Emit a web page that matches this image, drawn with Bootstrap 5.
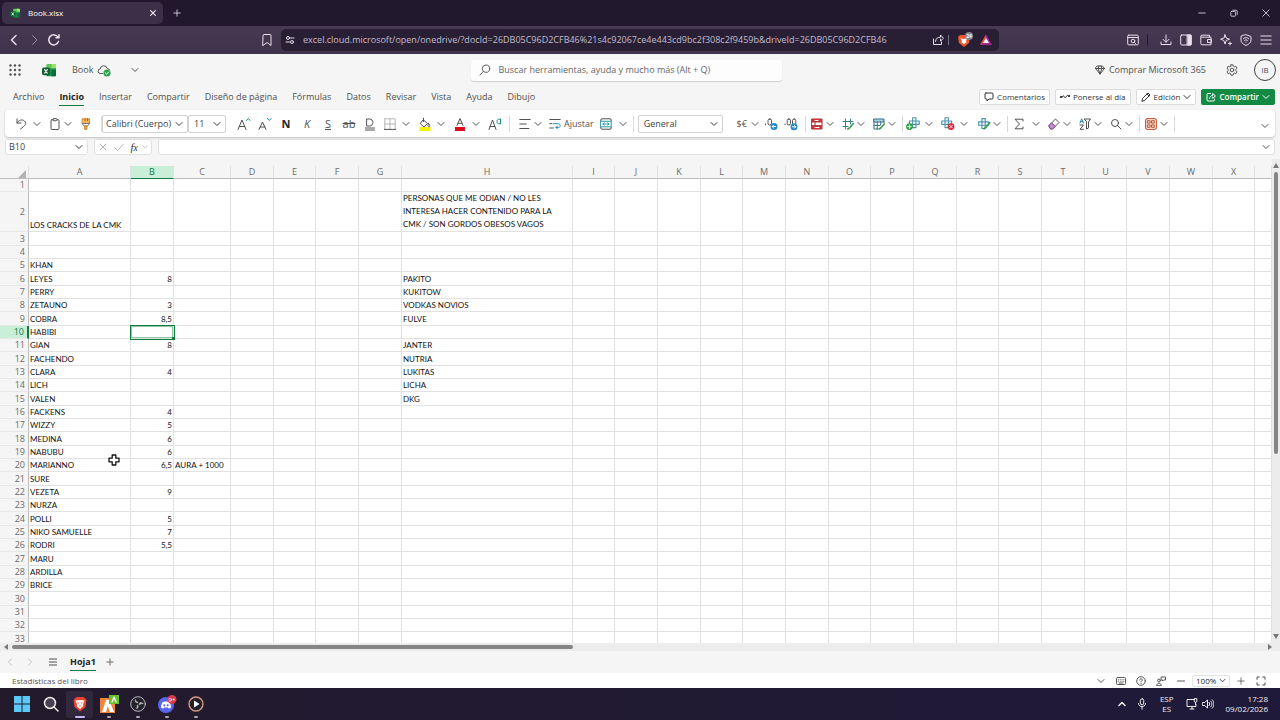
<!DOCTYPE html>
<html lang="es">
<head>
<meta charset="utf-8">
<meta name="viewport" content="width=device-width, initial-scale=1">
<title>Book.xlsx</title>
<link href="https://cdn.jsdelivr.net/npm/bootstrap@5.3.0/dist/css/bootstrap.min.css" rel="stylesheet">
<style>
:root{--ui:"Open Sans","Noto Sans",sans-serif;--green:#107c41;--line:#e1e1e1}
body{font-family:var(--ui);font-size:9px;line-height:14px;color:#505050;background:#f5f5f5;height:100vh;overflow:hidden}
button,select,input{font-family:inherit;color:inherit}
.plain{background:none;border:0;padding:0;font-size:inherit;line-height:inherit;display:inline-flex;align-items:center;justify-content:center;flex:none}
svg{display:block;flex:none;fill:none;stroke:currentColor;stroke-width:1;stroke-linecap:round;stroke-linejoin:round}
.flat{stroke:none}.solid{fill:currentColor;stroke:none}.heavy{stroke-width:1.5}
.i8{width:8px;height:8px}.i10{width:10px;height:10px}.i12{width:12px;height:12px}.i14{width:14px;height:14px}.i16{width:16px;height:16px}
a{color:inherit;text-decoration:none}
.side{flex:1 1 0}
/* browser chrome */
.tabstrip{height:26px;background:#21182d;color:#e9e4ee}
.browser-tab{width:161px;height:22px;margin-left:2px;padding:0 6px 0 8px;background:#3b3047;border-radius:5px;font-size:8px}
.addressbar{height:28px;background:linear-gradient(#463a53,#3e334a);color:#e6e0ea}
.urlbox{flex:0 1 718px;height:22px;background:#281f34;border-radius:5px;font-size:9px}
.urlbox input{background:none;border:0;padding:0;min-width:0;color:#c4bccd}
.win{gap:20px}
/* office header */
.office{height:32px}
.searchbox{width:311px;height:21px;background:#fdfdfd;border-radius:3px;box-shadow:0 1px 1px #cfcfcf;margin-right:32px}
.searchbox input{border:0;background:none;padding:0;color:#616161}
.searchbox input::placeholder{color:#666;opacity:1}
.avatar{width:22px;height:22px;border:1px solid #424242;border-radius:50%;font-size:8px}
.menu-row{height:24px;padding:0 5px 2px 13px}
.menu-row nav{gap:15px}
.menu-row nav a{line-height:17px}
.menu-row nav a.on,.sheet-on{font-weight:700;color:#242424;border-bottom:1px solid var(--green)}
.cmd{height:16px;border:1px solid #dcdcdc;background:#fff;border-radius:2px;font-size:8px;gap:3px;color:#333}
.cmd.share{background:#128a43;border-color:#128a43;color:#fff;font-weight:600}
/* ribbon */
.ribbon{height:27px;margin:0 5px;padding-left:6px;background:#fff;border-radius:4px;box-shadow:0 1px 2px #bdbdbd}
.rb{width:20px;height:20px}.rb.slim{width:14px}.rc{width:12px;height:20px}
.gap-px1{gap:1px}.gap-px3{gap:3px}.gap-px5{gap:5px}
.rb.labelled{width:auto;gap:3px;padding:0 2px}
.bar{width:1px;height:16px;background:#dadada;flex:none}
.pick{height:18px;border:1px solid #d1d1d1;border-radius:2px;background-color:#fff;color:#424242;font-size:9px;line-height:14px;padding:0 14px 0 3px;background-size:8px 8px;background-position:right 4px center;flex:none}
.ltr{font-size:11px;line-height:14px}
/* formula bar */
.fbar{height:16px;margin:2px 5px 11px;gap:6px}
.fbox{height:16px;border:1px solid #e0e0e0;background:#fff;border-radius:3px}
.fbox .form-select{border:0;padding-top:0;padding-bottom:0;height:14px}
/* sheet */
.sheet{min-height:0}
.cells{table-layout:fixed;width:100%;border-collapse:separate;border-spacing:0;background:#fff}
.cells th{font-weight:400;font-size:9px;line-height:12px;color:#6a6a6a;background:#f5f5f5;padding:0;text-align:center}
.cells thead th{height:13px;border-right:1px solid var(--line);border-bottom:1px solid #bdbdbd}
.cells thead th.sel{background:#caefd8;color:var(--green);border-bottom:1px solid var(--green)}
.cells tbody tr{height:13px}
.cells tbody tr:nth-child(3n){height:14px}
.cells tbody tr:nth-child(2){height:40px}
.cells tbody th{text-align:right;padding-right:3px;border-right:1px solid #bdbdbd;border-bottom:1px solid #e8e8e8}
.cells tbody th.sel{background:#caefd8;color:var(--green);border-right:2px solid var(--green)}
.cells td{font-family:Lato,"Open Sans",sans-serif;font-size:8px;line-height:12px;color:#111;padding:0 1px;border-right:1px solid var(--line);border-bottom:1px solid var(--line);vertical-align:bottom;white-space:pre}
.cells td.num{text-align:right}
.cells td.wrapped{line-height:13px}
.cells td.active-cell{outline:1px solid var(--green);box-shadow:inset 0 0 0 1px #8cc7a4;position:relative}
.cells td.active-cell::after{content:"";position:absolute;right:-2px;bottom:-2px;width:3px;height:3px;background:var(--green)}
.corner{width:0;height:0;border-left:8px solid transparent;border-bottom:8px solid #b3b3b3;margin:3px 2px 0 auto}
.pointer{position:absolute;left:108px;top:288px}
.vscroll{width:8px;background:#ececec;margin-top:-7px}
.vscroll i{width:4px;height:282px;background:#858585;border-radius:2px}
.hscroll{height:8px;background:#ececec}
.hscroll i{width:44%;height:4px;background:#858585;border-radius:2px}
.tri{stroke:none;fill:#777}
.sheetbar{height:22px}
.sheet-on{line-height:17px}
.status{height:15px;padding:0 14px 0 12px;background:#fff;font-size:8px;color:#555}
.status>div{gap:6px}
.zoompick{height:12px;width:38px;border:1px solid #e3e3e3;border-radius:2px;font-size:8px;line-height:10px;padding:0 10px 0 3px;background-size:7px 7px;background-position:right 3px center}
/* taskbar */
.taskbar{height:32px;background:linear-gradient(90deg,#231a2c,#1f1a3a);color:#eee;font-size:8px;line-height:10px}
.app{width:27px;height:27px;margin-right:2px;border-radius:3px;position:relative}
.app.on{background:#30283d}
.app.run::after{content:"";position:absolute;bottom:0;left:50%;width:4px;height:2px;margin-left:-2px;border-radius:1px;background:#aaa}
.app.on::after{width:10px;margin-left:-5px;background:#c9b6ee}
</style>
</head>
<body class="d-flex flex-column">
<svg width="0" height="0" style="display:none">
<symbol id="chev" viewBox="0 0 8 8"><path d="M1 2.500 4 5.500 7 2.500"/></symbol>
<symbol id="xl" viewBox="0 0 16 16"><g stroke="none"><path d="M6 1h9a1 1 0 0 1 1 1v5H5V2a1 1 0 0 1 1-1z" fill="#5fc653"/><path d="M11 1h4a1 1 0 0 1 1 1v5h-5z" fill="#9be36e"/><path d="M5 6h11v8a1 1 0 0 1-1 1H6a1 1 0 0 1-1-1z" fill="#1e9348"/><path d="M11 8h5v6a1 1 0 0 1-1 1h-4z" fill="#0f6b38"/><rect x="0" y="5" width="9" height="9" rx="2" fill="#0c5f33"/></g><path d="M3 7.500 6 11.500M6 7.500 3 11.500" stroke="#fff" stroke-width="1.300"/></symbol>
<symbol id="plus" viewBox="0 0 10 10"><path d="M5 1v8M1 5h8"/></symbol>
<symbol id="cross" viewBox="0 0 10 10"><path d="M2 2 8 8M8 2 2 8"/></symbol>
<symbol id="cells" viewBox="0 0 16 16"><path d="M6 2h4v4h4v4h-4v4H6v-4H2V6h4zM6 6h4v4H6z" stroke="#4a93ad" stroke-width="1.400"/></symbol>
</svg>

<header class="tabstrip d-flex align-items-center flex-shrink-0">
  <div class="browser-tab d-flex align-items-center">
    <svg class="i10"><use href="#xl"/></svg><span class="ms-1 ps-1 flex-grow-1 text-white">Book.xlsx</span>
    <button class="plain" aria-label="Cerrar pestaña"><svg class="i8 heavy" viewBox="0 0 10 10"><path d="M2 2 8 8M8 2 2 8"/></svg></button>
  </div>
  <button class="plain ms-2 i12" aria-label="Nueva pestaña"><svg class="i8"><use href="#plus"/></svg></button>
  <div class="win d-flex ms-auto pe-2">
    <button class="plain i12" aria-label="Minimizar"><svg class="i8" viewBox="0 0 10 10"><path d="M1 5h8"/></svg></button>
    <button class="plain i12" aria-label="Restaurar"><svg class="i8" viewBox="0 0 10 10"><rect x="1" y="3" width="6" height="6" rx="1"/><path d="M3.500 1.500H7.500a1.500 1.500 0 0 1 1.500 1.500v4"/></svg></button>
    <button class="plain i12" aria-label="Cerrar"><svg class="i8" viewBox="0 0 10 10"><path d="M1 1 9 9M9 1 1 9"/></svg></button>
  </div>
</header>

<div class="addressbar d-flex align-items-center flex-shrink-0">
  <div class="side d-flex ps-2 gap-2">
    <button class="plain i12" aria-label="Atrás"><svg class="i12 heavy" viewBox="0 0 12 12"><path d="M8 1.500 3.500 6 8 10.500"/></svg></button>
    <button class="plain i12 opacity-50" aria-label="Adelante"><svg class="i12" viewBox="0 0 12 12"><path d="M4.500 1.500 9 6 4.500 10.500"/></svg></button>
    <button class="plain i12" aria-label="Recargar"><svg class="i12 heavy" viewBox="0 0 12 12"><path d="M10.500 7.500A5 5 0 1 1 10 3.200M11 .8v3H8"/></svg></button>
    <button class="plain i12 ms-auto me-2" aria-label="Marcador"><svg class="i12" viewBox="0 0 12 12"><path d="M2 1.500a1 1 0 0 1 1-1h6a1 1 0 0 1 1 1v10L6 8.500l-4 3z"/></svg></button>
  </div>
  <div class="urlbox d-flex align-items-center px-1">
    <svg class="i10" viewBox="0 0 10 10"><circle cx="3" cy="3" r="1.500"/><path d="M5.500 3H9M1 7h3.500"/><circle cx="7" cy="7" r="1.500"/></svg>
    <input class="flex-grow-1 ms-2" aria-label="Dirección" value="excel.cloud.microsoft/open/onedrive/?docId=26DB05C96D2CFB46%21s4c92067ce4e443cd9bc2f308c2f9459b&amp;driveId=26DB05C96D2CFB46">
    <button class="plain" aria-label="Compartir página"><svg class="i12" viewBox="0 0 12 12"><path d="M1.500 5v5.500h8V8M3.500 7.500c.3-3 2-4.300 5-4.300V1l3 3.200-3 3V5"/></svg></button>
    <span class="bar mx-1" style="height:10px;background:#7b7187"></span>
    <button class="plain mx-1" aria-label="Brave Shields"><svg class="i16 flat" viewBox="0 0 16 16"><path d="M3 3h8l2 2-1 6-5 4-5-4-1-6z" fill="#f0562b"/><path d="M3.500 6.200 7 7l3.500-.8L9 9l.5 1.500L7 12l-2.500-1.500L5 9z" fill="#fff"/><circle cx="12" cy="4" r="4" fill="#85828c"/><text x="12" y="6" font-size="5" text-anchor="middle" fill="#fff" font-weight="700">24</text></svg></button>
    <button class="plain" aria-label="BAT" style="width:18px"><svg class="i12 flat" viewBox="0 0 12 12"><path d="M6 .5 12 11H0z" fill="#a3278f"/><path d="M6 .5V4L3 9l-3 2z" fill="#ff4724"/><path d="M6 4l3 5H3z" fill="#fff"/></svg></button>
  </div>
  <div class="side d-flex justify-content-end gap-2 pe-2">
    <button class="plain i12" aria-label="Buscar en página"><svg class="i12" viewBox="0 0 12 12"><rect x=".7" y="1.200" width="10.600" height="9.600" rx="1"/><path d="M1 3.500h10M7.500 8.500 8.500 9.500"/><circle cx="6" cy="7" r="1.800"/></svg></button>
    <span class="bar me-1" style="height:12px;background:#241c2f"></span>
    <button class="plain i12" aria-label="Descargas"><svg class="i12" viewBox="0 0 12 12"><path d="M6 1v7M3 5.300 6 8.300l3-3M1 8v2.500h10V8"/></svg></button>
    <button class="plain i12" aria-label="Barra lateral"><svg class="i12" viewBox="0 0 12 12"><rect x=".7" y="1" width="10.600" height="10" rx="1"/><path d="M7.500 1h3.500v10H7.500z" fill="currentColor"/></svg></button>
    <button class="plain i12" aria-label="Cartera"><svg class="i12" viewBox="0 0 12 12"><path d="M9.500 3V1.200H2A1.200 1.200 0 0 0 .8 2.500v7A1.300 1.300 0 0 0 2 10.800h9V3.200H1.200M11 5.500H7.500v3H11z"/></svg></button>
    <button class="plain i12" aria-label="Leo"><svg class="i12" viewBox="0 0 12 12"><path d="M5 .8 6.200 4 9.500 5.200 6.200 6.500 5 10 3.800 6.500.6 5.200 3.800 4zM10 8v3M8.500 9.500h3"/></svg></button>
    <button class="plain i12" aria-label="VPN"><svg class="i12" viewBox="0 0 12 12"><path d="M6 .7 11 2.500v3.500c0 2.500-2 4.300-5 5.500C3 10.300 1 8.500 1 6V2.500zM3.300 4.700c1.600-1.500 3.800-1.500 5.400 0M4.500 6.400c1-.8 2-.8 3 0M6 8v.3"/></svg></button>
    <button class="plain i12" aria-label="Menú"><svg class="i12" viewBox="0 0 12 12"><path d="M.8 2h10.400M.8 6h10.400M.8 10h10.400"/></svg></button>
  </div>
</div>

<div class="office d-flex align-items-center flex-shrink-0">
  <div class="side d-flex align-items-center ps-2">
    <button class="plain me-1" aria-label="Aplicaciones" style="width:14px"><svg class="i12 solid" viewBox="0 0 12 12"><g id="dots"><circle cx="1.500" cy="1.500" r="1.200"/><circle cx="6" cy="1.500" r="1.200"/><circle cx="10.500" cy="1.500" r="1.200"/></g><use href="#dots" y="4.500"/><use href="#dots" y="9"/></svg></button>
    <svg class="i14 ms-3 me-3"><use href="#xl"/></svg>
    <span class="me-1">Book</span>
    <svg class="i14" viewBox="0 0 14 14"><path d="M5.500 10.500H3.500a2.300 2.300 0 0 1-.2-4.600 3.500 3.500 0 0 1 6.900-.4A2.400 2.400 0 0 1 12.600 7"/><circle cx="10" cy="10" r="3.600" fill="#2da44e" stroke="none"/><path d="M8.400 10l1.200 1.200 2-2.200" stroke="#fff"/></svg>
    <button class="plain ms-3 ps-1" aria-label="Más"><svg class="i8"><use href="#chev"/></svg></button>
  </div>
  <div class="searchbox d-flex align-items-center">
    <svg class="i12 ms-2 me-2" viewBox="0 0 12 12" style="color:#616161"><circle cx="7" cy="4.700" r="3.700"/><path d="M4.200 7.500 1 11"/></svg>
    <input class="flex-grow-1" aria-label="Buscar" placeholder="Buscar herramientas, ayuda y mucho más (Alt + Q)">
  </div>
  <div class="side d-flex align-items-center justify-content-end pe-1">
    <button class="plain me-3"><svg class="i10 me-1" viewBox="0 0 10 10"><path d="M2.500 1h5L9.500 3.500 5 9 .5 3.500zM.5 3.500h9M5 9 3.200 3.500 4 1M5 9l1.800-5.500L6 1"/></svg>Comprar Microsoft 365</button>
    <button class="plain ms-1 me-2" aria-label="Configuración"><svg class="i12" viewBox="0 0 12 12"><circle cx="6" cy="6" r="1.800"/><path d="M5 .8h2l.4 1.500 1 .5 1.500-.5 1.100 1.800L9.900 5.300v1.400L11 7.900 9.900 9.700l-1.500-.5-1 .5L7 11.200H5l-.4-1.500-1-.5-1.500.5L1 7.900l1.100-1.200V5.300L1 4.100l1.100-1.800 1.500.5 1-.5z"/></svg></button>
    <button class="plain avatar ms-2" aria-label="Cuenta">IB</button>
  </div>
</div>

<div class="menu-row d-flex align-items-center flex-shrink-0">
  <nav class="d-flex" aria-label="Cinta">
    <a href="#">Archivo</a><a href="#" class="on">Inicio</a><a href="#">Insertar</a><a href="#">Compartir</a><a href="#">Diseño de página</a><a href="#">Fórmulas</a><a href="#">Datos</a><a href="#">Revisar</a><a href="#">Vista</a><a href="#">Ayuda</a><a href="#">Dibujo</a>
  </nav>
  <div class="d-flex ms-auto gap-px5">
    <button class="plain cmd px-1"><svg class="i10" viewBox="0 0 10 10"><path d="M2 1h6a1 1 0 0 1 1 1v4a1 1 0 0 1-1 1H5L3 9V7H2a1 1 0 0 1-1-1V2a1 1 0 0 1 1-1z"/></svg>Comentarios</button>
    <button class="plain cmd px-1"><svg class="i10" viewBox="0 0 10 10"><path d="M1 5h1.500C4 1 4.500 8 6 5s2-1 3-1"/><circle cx="1" cy="5" r=".7" fill="currentColor"/><circle cx="9" cy="4" r=".7" fill="currentColor"/></svg>Ponerse al día</button>
    <button class="plain cmd px-1"><svg class="i10" viewBox="0 0 10 10"><path d="M1 9l.7-2.700L7 1l2 2-5.300 5.300zM6 2l2 2"/></svg>Edición<svg class="i8"><use href="#chev"/></svg></button>
    <button class="plain cmd share px-1"><svg class="i10" viewBox="0 0 10 10"><path d="M4.500 1.500H2a1 1 0 0 0-1 1V8a1 1 0 0 0 1 1h5.500a1 1 0 0 0 1-1V7M3.500 6.500c.3-2 1.500-3 3.200-3V1.500L9.500 4 6.700 6.300V5"/></svg>Compartir<svg class="i8"><use href="#chev"/></svg></button>
  </div>
</div>

<div class="ribbon d-flex align-items-center flex-shrink-0">
  <div class="d-flex gap-px5">
    <div class="d-flex"><button class="plain rb" aria-label="Deshacer"><svg class="i12" viewBox="0 0 12 12"><path d="M2 1v4h4M2 5c2-3 5-4 7.500-2S10 7.500 8.500 8.500L5.500 11"/></svg></button><button class="plain rc" aria-label="Opciones de deshacer"><svg class="i8"><use href="#chev"/></svg></button></div>
    <div class="d-flex"><button class="plain rb slim" aria-label="Pegar"><svg class="i12" viewBox="0 0 12 12"><rect x="2" y="1.700" width="8" height="9.800" rx="1"/><rect x="4" y=".6" width="4" height="2.200" rx="1" fill="#fff"/></svg></button><button class="plain rc" aria-label="Opciones de pegado"><svg class="i8"><use href="#chev"/></svg></button></div>
    <button class="plain rb slim" aria-label="Copiar formato"><svg class="i12" viewBox="0 0 12 12"><path d="M2.500.8h7v4.700h-7z" fill="#f5b95c" stroke="#d9822b"/><path d="M5 .8v2M7.500.8v2" stroke="#b8651b"/><path d="M2.500 5.500h7L7.500 8H4.500z" fill="#fff" stroke="#777"/><path d="M5 8h2v3.300H5z" fill="#f5b95c" stroke="#c9822b"/></svg></button>
  </div>
  <span class="bar ms-2"></span>
  <select class="form-select pick" aria-label="Fuente" style="width:86px"><option>Calibri (Cuerpo)</option></select>
  <select class="form-select pick" aria-label="Tamaño de fuente" style="width:38px;padding-left:5px"><option>11</option></select>
  <div class="d-flex gap-px1 ms-2">
    <button class="plain rb" aria-label="Aumentar fuente"><svg class="i14" viewBox="0 0 14 14"><path d="M1 12.500 5 3l4 9.500M2.300 9.500h5.400"/><path d="M9.500 3.500l1.800-2 1.800 2" stroke="#1a8a8a"/></svg></button>
    <button class="plain rb" aria-label="Reducir fuente"><svg class="i14" viewBox="0 0 14 14"><path d="M1 12.500 4.500 5 8 12.500M2.200 10h4.600"/><path d="M9.500 1.500l1.800 2 1.800-2" stroke="#1a8a8a"/></svg></button>
    <button class="plain rb ltr fw-bold text-dark">N</button>
    <button class="plain rb ltr fst-italic">K</button>
    <button class="plain rb ltr text-decoration-underline">S</button>
    <button class="plain rb ltr text-decoration-line-through">ab</button>
    <button class="plain rb" aria-label="Doble subrayado"><svg class="i14" viewBox="0 0 14 14"><path d="M4 2h2.500C11 2 11 9 6.500 9H4zM2.500 11h9M2.500 13h9"/></svg></button>
  </div>
  <div class="d-flex gap-px3">
    <div class="d-flex"><button class="plain rb" aria-label="Bordes"><svg class="i12" viewBox="0 0 12 12"><path d="M.8.8h10.400v10.400M.8.8v10.400M6 1v10M1 6h10" stroke="#b5b5b5"/><path d="M.5 11.400h11"/></svg></button><button class="plain rc" aria-label="Más bordes"><svg class="i8"><use href="#chev"/></svg></button></div>
    <div class="d-flex"><button class="plain rb" aria-label="Color de relleno"><svg class="i14" viewBox="0 0 14 14"><path d="M1.500 10h11v4h-11z" fill="#f4f400" stroke="none"/><path d="M5.500 3l4 3.500L6 10 2.500 6.800zM5.500 4.500V1.200M10.500 6.500c2 2 1.500 3 .5 3s-1.800-1-.5-3z"/></svg></button><button class="plain rc" aria-label="Más rellenos"><svg class="i8"><use href="#chev"/></svg></button></div>
    <div class="d-flex"><button class="plain rb" aria-label="Color de fuente"><svg class="i14" viewBox="0 0 14 14"><path d="M2 10h10v4H2z" fill="#e00b1c" stroke="none"/><path d="M4 8.500 7 1.500l3 7M5 6.300h4"/></svg></button><button class="plain rc" aria-label="Más colores"><svg class="i8"><use href="#chev"/></svg></button></div>
    <button class="plain rb" aria-label="Formato de texto"><svg class="i14" viewBox="0 0 14 14"><path d="M1 12.500 4.500 3 8 12.500M2.200 9.500h4.600"/><path d="M12.500 2v5M12.500 3.200C11 1 9 2.500 9 4.500s2 3.500 3.500 1.300" stroke="#1a8a8a"/></svg></button>
  </div>
  <span class="bar ms-1 me-2"></span>
  <div class="d-flex gap-px3">
    <div class="d-flex"><button class="plain rb slim" aria-label="Alineación"><svg class="i12" viewBox="0 0 12 12"><path d="M.8 1.500h10.400M.8 6h6.500M.8 10.500h9"/></svg></button><button class="plain rc" aria-label="Más alineaciones"><svg class="i8"><use href="#chev"/></svg></button></div>
    <button class="plain rb labelled"><svg class="i12" viewBox="0 0 12 12"><path d="M.8 1.500h10.400M.8 10h3.500M.8 5.700H3"/><path d="M4.500 5.700h5c2.200 0 2.200 3.800 0 3.800H7M8.500 8 7 9.500 8.500 11" stroke="#2b88b8"/></svg>Ajustar</button>
    <div class="d-flex"><button class="plain rb slim" aria-label="Combinar"><svg class="i12" viewBox="0 0 12 12"><path d="M.8 3.200V2A1.200 1.200 0 0 1 2 .8h8A1.200 1.200 0 0 1 11.200 2v1.200M.8 9v1.200A1.200 1.200 0 0 0 2 11.200h8a1.200 1.200 0 0 0 1.200-1.200V9"/><path d="M.8 3.300h10.400v5.500H.8zM3 6h6M4.200 4.800 3 6l1.200 1.200M7.800 4.800 9 6 7.800 7.200" stroke="#2b9aa8"/></svg></button><button class="plain rc ms-1" aria-label="Más de combinar"><svg class="i8"><use href="#chev"/></svg></button></div>
  </div>
  <span class="bar ms-1 me-1"></span>
  <select class="form-select pick" aria-label="Formato de número" style="width:85px;padding-left:5px"><option>General</option></select>
  <div class="d-flex align-items-center ms-2 ps-1">
    <button class="plain rb slim">$€</button><button class="plain rc" aria-label="Más monedas"><svg class="i8"><use href="#chev"/></svg></button>
    <button class="plain rb" aria-label="Disminuir decimales"><svg class="i14" viewBox="0 0 14 14"><path d="M1.500 7v.8"/><rect x="4" y="2" width="3.500" height="6" rx="1.700"/><circle cx="10" cy="9.500" r="3.500" fill="#2489c9" stroke="none"/><path d="M8.300 9.500h3.400M9.500 8.200 8.200 9.500l1.300 1.300" stroke="#fff"/></svg></button>
    <button class="plain rb" aria-label="Aumentar decimales"><svg class="i14" viewBox="0 0 14 14"><path d="M1 7v.8"/><rect x="3.200" y="2" width="3.300" height="6" rx="1.600"/><rect x="8.500" y="2" width="3.300" height="6" rx="1.600"/><circle cx="10" cy="9.800" r="3.500" fill="#2489c9" stroke="none"/><path d="M8.300 9.800h3.400M10.500 8.500l1.300 1.300-1.300 1.300" stroke="#fff"/></svg></button>
  </div>
  <span class="bar mx-1"></span>
  <div class="d-flex gap-px5">
    <div class="d-flex"><button class="plain rb slim" aria-label="Formato condicional"><svg class="i12" viewBox="0 0 12 12"><path d="M1 1h10v10H1z" fill="#fff" stroke="#a3363b"/><path d="M1 1h10v3H1zM1 7.500h10V11H1z" fill="#d13438" stroke="none"/><path d="M1 4h10M1 7.700h10M4 4v4" stroke="#a3363b"/><path d="M4 2.500h3M4 9.500h4" stroke="#fff"/></svg></button><button class="plain rc" aria-label="Reglas"><svg class="i8"><use href="#chev"/></svg></button></div>
    <div class="d-flex"><button class="plain rb slim" aria-label="Estilos"><svg class="i12" viewBox="0 0 12 12"><path d="M3.500 1v10M8.500 1v5M1 3.500h10M1 8.500h5" stroke="#3b7e8c"/><path d="M11.300 5.500 7.500 10l-1.700 1" stroke="#3a9d4a" stroke-width="1.600"/></svg></button><button class="plain rc" aria-label="Más estilos"><svg class="i8"><use href="#chev"/></svg></button></div>
    <div class="d-flex"><button class="plain rb slim" aria-label="Dar formato como tabla"><svg class="i12" viewBox="0 0 12 12"><path d="M1 1h10v3H1z" fill="#a8d1e6" stroke="#3a6f8a"/><path d="M1 4v7h4M4.300 4v7M1 7.500h6M11 4v1M7.700 4v3" stroke="#3a6f8a"/><path d="M11.300 6 7.800 10l-1.700 1" stroke="#3a9d4a" stroke-width="1.600"/></svg></button><button class="plain rc" aria-label="Más tablas"><svg class="i8"><use href="#chev"/></svg></button></div>
  </div>
  <span class="bar ms-1"></span>
  <div class="d-flex gap-px3">
    <div class="d-flex"><button class="plain rb" aria-label="Insertar celdas"><svg class="i14" viewBox="0 0 16 16"><use href="#cells" x="2" y="-1" width="15" height="15"/><circle cx="4" cy="11" r="3.800" fill="#2f9e44" stroke="none"/><path d="M4 9v4M2 11h4" stroke="#fff"/></svg></button><button class="plain rc" aria-label="Más de insertar"><svg class="i8"><use href="#chev"/></svg></button></div>
    <div class="d-flex"><button class="plain rb" aria-label="Eliminar celdas"><svg class="i14" viewBox="0 0 16 16"><use href="#cells" x="-1" y="-1" width="15" height="15"/><circle cx="11.500" cy="11" r="3.800" fill="#d92c3a" stroke="none"/><path d="M10 9.500l3 3M13 9.500l-3 3" stroke="#fff"/></svg></button><button class="plain rc" aria-label="Más de eliminar"><svg class="i8"><use href="#chev"/></svg></button></div>
    <div class="d-flex"><button class="plain rb slim ms-1" aria-label="Formato de celdas"><svg class="i14" viewBox="0 0 16 16"><use href="#cells" width="15" height="15"/><path d="M14.500 6.500 10 12l-2 1.500" stroke="#3a9d4a" stroke-width="2"/></svg></button><button class="plain rc" aria-label="Más de formato"><svg class="i8"><use href="#chev"/></svg></button></div>
  </div>
  <span class="bar mx-1"></span>
  <div class="d-flex gap-px5">
    <div class="d-flex"><button class="plain rb slim" aria-label="Autosuma"><svg class="i12" viewBox="0 0 12 12"><path d="M10 3V1.200H2L6.500 6 2 10.800h8V9"/></svg></button><button class="plain rc ms-1" aria-label="Más funciones"><svg class="i8"><use href="#chev"/></svg></button></div>
    <div class="d-flex"><button class="plain rb slim" aria-label="Borrar"><svg class="i12" viewBox="0 0 12 12"><path d="M1 7.500 7.500 1 11 4.500 4.500 11H3z"/><path d="M1 7.500 3.700 4.800 7.200 8.300 4.500 11H3z" fill="#c98bd0" stroke="#8f3f9b"/></svg></button><button class="plain rc" aria-label="Más de borrar"><svg class="i8"><use href="#chev"/></svg></button></div>
    <div class="d-flex"><button class="plain rb slim" aria-label="Ordenar y filtrar"><svg class="i12" viewBox="0 0 12 12"><path d="M1 5 2.700.8 4.400 5M1.500 3.700h2.400" stroke="#2b88a8"/><path d="M1 7h3.500L1 11.300h3.500"/><path d="M5.500 1h6L9.500 4v6l-2 1V4z"/></svg></button><button class="plain rc" aria-label="Más de ordenar"><svg class="i8"><use href="#chev"/></svg></button></div>
    <div class="d-flex"><button class="plain rb slim" aria-label="Buscar y seleccionar"><svg class="i12" viewBox="0 0 12 12"><circle cx="5" cy="5" r="3.500"/><path d="M7.600 7.600 11 11"/></svg></button><button class="plain rc" aria-label="Más de buscar"><svg class="i8"><use href="#chev"/></svg></button></div>
  </div>
  <span class="bar mx-1"></span>
  <div class="d-flex"><button class="plain rb slim" aria-label="Complementos"><svg class="i12" viewBox="0 0 12 12"><rect x=".6" y=".6" width="10.800" height="10.800" rx="1.500" fill="#fbe3da" stroke="#b9512f"/><path d="M2.700 2.700h2.400v2.400H2.700zM6.900 2.700h2.400v2.400H6.900zM2.700 6.900h2.400v2.400H2.700zM6.900 6.900h2.400v2.400H6.900z" stroke="#b9512f"/></svg></button><button class="plain rc" aria-label="Más complementos"><svg class="i8"><use href="#chev"/></svg></button></div>
  <span class="bar mx-1"></span>
  <button class="plain rc ms-auto me-1 pt-1" aria-label="Opciones de la cinta"><svg class="i8"><use href="#chev"/></svg></button>
</div>

<div class="fbar d-flex flex-shrink-0">
  <div class="fbox" style="width:83px"><select class="form-select pick w-100" aria-label="Cuadro de nombres"><option>B10</option></select></div>
  <div class="fbox d-flex align-items-center justify-content-around" style="width:58px;color:#b5b5b5">
    <button class="plain" aria-label="Cancelar"><svg class="i10"><use href="#cross"/></svg></button>
    <button class="plain" aria-label="Introducir"><svg class="i10" viewBox="0 0 10 10"><path d="M.5 5.500 3.500 8.500 9.500 2"/></svg></button>
    <button class="plain" aria-label="Insertar función"><em style="font-family:'Liberation Serif',serif;font-size:11px;color:#333">f<small>x</small></em><svg class="i8 ms-1" style="width:6px"><use href="#chev"/></svg></button>
  </div>
  <div class="fbox flex-grow-1 d-flex align-items-center px-1"><input class="plain flex-grow-1" aria-label="Barra de fórmulas"><svg class="i8"><use href="#chev"/></svg></div>
</div>

<main class="sheet flex-grow-1 d-flex">
  <div class="flex-grow-1 overflow-hidden position-relative">
    <table class="cells"><colgroup></colgroup><thead></thead><tbody></tbody></table>
    <svg class="pointer" width="12" height="12" viewBox="0 0 12 12"><path d="M4.200 1h3.600v3.200H11v3.600H7.800V11H4.200V7.800H1V4.200h3.200z" fill="#fff" stroke="#111" stroke-width="1.300"/></svg>
  </div>
  <div class="vscroll d-flex flex-column align-items-center flex-shrink-0">
    <svg class="tri mt-1 mb-1" width="6" height="5" viewBox="0 0 6 5"><path d="M3 0 6 5H0z"/></svg><i></i>
    <svg class="tri mt-auto mb-1" width="6" height="5" viewBox="0 0 6 5"><path d="M0 0h6L3 5z"/></svg>
  </div>
</main>
<div class="hscroll d-flex align-items-center flex-shrink-0 ps-1">
  <svg class="tri me-1" width="4" height="6" viewBox="0 0 4 6"><path d="M4 0v6L0 3z"/></svg><i></i>
  <svg class="tri ms-auto me-2" width="4" height="6" viewBox="0 0 4 6"><path d="M0 0v6L4 3z"/></svg>
</div>
<div class="sheetbar d-flex align-items-center flex-shrink-0 ps-1">
  <button class="plain i12" aria-label="Hoja anterior" style="color:#c2c2c2"><svg class="i8" viewBox="0 0 8 8"><path d="M5.500 1 2.500 4l3 3"/></svg></button>
  <button class="plain i12 ms-2" aria-label="Hoja siguiente" style="color:#c2c2c2"><svg class="i8" viewBox="0 0 8 8"><path d="M2.500 1l3 3-3 3"/></svg></button>
  <button class="plain i12 ms-2 me-2" aria-label="Todas las hojas" style="width:18px"><svg class="i8" viewBox="0 0 8 8"><path d="M0 1h8M0 4h8M0 7h8"/></svg></button>
  <a href="#" class="sheet-on">Hoja1</a>
  <button class="plain i12 ms-2" aria-label="Agregar hoja"><svg class="i8"><use href="#plus"/></svg></button>
</div>
<footer class="status d-flex align-items-center flex-shrink-0">
  <span>Estadísticas del libro</span>
  <div class="d-flex align-items-center ms-auto">
    <button class="plain i10" aria-label="Más estado"><svg class="i8"><use href="#chev"/></svg></button>
    <button class="plain i10 ms-1" aria-label="Teclado"><svg class="i10" viewBox="0 0 10 10"><rect x=".5" y="1.500" width="9" height="7" rx="1"/><path d="M2.300 3.700h.1M4.200 3.700h.1M6 3.700h.1M7.700 3.700h.1M2.300 5.300h.1M4.200 5.300h.1M6 5.300h.1M7.700 5.300h.1M3 7h4"/></svg></button>
    <button class="plain i10 ms-1" aria-label="Ayuda"><svg class="i10" viewBox="0 0 10 10"><circle cx="5" cy="5" r="4.300"/><path d="M3.700 4c0-1.800 2.700-1.600 2.600 0C6.200 5 5 5 5 6M5 7.500v.1"/></svg></button>
    <button class="plain i10 ms-1" aria-label="Comentarios a Microsoft"><svg class="i10" viewBox="0 0 10 10"><circle cx="3" cy="4.500" r="1.400"/><path d="M.7 9.300C.7 6.500 5.300 6.500 5.300 9.300zM5.500 1h4v3H7.500L6.500 5V4h-1z"/></svg></button>
    <button class="plain i10 ms-1" aria-label="Alejar"><svg class="i8" viewBox="0 0 8 8"><path d="M.5 4h7"/></svg></button>
    <select class="form-select zoompick" aria-label="Zoom"><option>100%</option></select>
    <button class="plain i10" aria-label="Acercar"><svg class="i8"><use href="#plus"/></svg></button>
    <button class="plain i10 ms-1" aria-label="Pantalla completa"><svg class="i10" viewBox="0 0 10 10"><path d="M1 3.300V1h2.300M6.700 1H9v2.300M9 6.700V9H6.700M3.300 9H1V6.700"/></svg></button>
  </div>
</footer>
<div class="taskbar d-flex align-items-center flex-shrink-0 px-2">
  <button class="plain app" aria-label="Inicio"><svg class="i16 flat" viewBox="0 0 16 16"><path fill="#5cc8f5" d="M0 0h7.500v7.500H0zM8.500 0H16v7.500H8.500zM0 8.500h7.500V16H0zM8.500 8.500H16V16H8.500z"/></svg></button>
  <button class="plain app" aria-label="Búsqueda"><svg class="i16 heavy" viewBox="0 0 16 16"><circle cx="7" cy="7" r="5.500" fill="#4a4254"/><path d="M11 11l4 4"/></svg></button>
  <button class="plain app on run" aria-label="Brave"><svg class="i16 flat" viewBox="0 0 16 16"><path d="M4.500 1h7L14.500 4l-1 7L8 15.500 2.500 11l-1-7z" fill="#f1432f"/><path d="M3.500 4.500 8 4l4.500.5-1.500 4 .3 1.500L8 13l-3.300-3 .3-1.500z" fill="#fff"/><path d="M4.800 6.200l2.200.5-.3 1zM11.200 6.200 9 6.700l.3 1zM7 9.500h2L8 11z" fill="#f1432f"/></svg></button>
  <button class="plain app run" aria-label="FiveM"><svg class="flat" width="20" height="18" viewBox="0 0 20 18"><path d="M1 3h15v15H1z" fill="#f0863c"/><path d="M7 5h3l5 12h-4L8.800 11 7 17H3z" fill="#fff"/><path d="M10 0h10v9H10z" fill="#6abf2e"/><path d="M13 7l2-5 2 5" stroke="#fff" stroke-width="1.300"/></svg></button>
  <button class="plain app run" aria-label="OBS"><svg class="i16" viewBox="0 0 16 16"><circle cx="8" cy="8" r="7.300" fill="#25232b" stroke="#b8b6bd"/><g fill="#b8b6bd" stroke="none"><path d="M7.500 7C5 7 4 4.500 5.500 2.500 5 5.500 8 5 8.500 7.300zM9 7.500c1.200-2.200 4-1.500 5 .8-2.500-1.800-3.500 1-5.300.6zM8 9c1.300 2.100-.3 4.300-2.900 4.200 2.800-1 .9-3.200 2.200-4.500z"/></g></svg></button>
  <button class="plain app run" aria-label="Discord"><svg class="flat" width="20" height="18" viewBox="0 0 20 18"><circle cx="9" cy="10" r="8" fill="#5865f2"/><path d="M5.500 7.200C7 6.300 11 6.300 12.500 7.200c1 1.600 1.600 3.300 1.500 5.300-1 .8-1.800 1-2.500 1l-.7-1H7.200l-.7 1c-.7 0-1.500-.2-2.500-1-.1-2 .5-3.700 1.500-5.300z" fill="#fff"/><circle cx="7.300" cy="10.300" r="1.100" fill="#5865f2"/><circle cx="10.700" cy="10.300" r="1.100" fill="#5865f2"/><circle cx="15" cy="4.500" r="4.500" fill="#d83b4b"/><text x="15" y="7" font-size="6" text-anchor="middle" fill="#fff">9+</text></svg></button>
  <button class="plain app run" aria-label="Reproductor"><svg class="i16" viewBox="0 0 16 16"><circle cx="8" cy="8" r="7" fill="#22202a" stroke="#d59a86" stroke-width="1.400"/><path d="M6 4.500 11.500 8 6 11.500z" fill="#fff" stroke="none"/></svg></button>
  <div class="d-flex align-items-center ms-auto pe-1">
    <button class="plain i12 me-1" aria-label="Iconos ocultos"><svg class="i8 heavy" viewBox="0 0 8 8"><path d="M1 5.500 4 2.500l3 3"/></svg></button>
    <button class="plain i12 mx-1" aria-label="Micrófono"><svg class="i12" viewBox="0 0 12 12"><rect x="4.300" y=".8" width="3.400" height="6" rx="1.700"/><path d="M2.500 5.500c0 4.300 7 4.300 7 0M6 9v2.300"/></svg></button>
    <span class="text-center ms-2 me-2 pe-1">ESP<br>ES</span>
    <button class="plain i12" aria-label="Red"><svg class="i12" viewBox="0 0 12 12"><path d="M8 1.500H1v7h9V6.500M4 11h4M6 8.500V11M9.500 4.500v2M8.300 1v2.200c0 1.600 2.500 1.600 2.500 0V1z"/></svg></button>
    <button class="plain i12 ms-1 me-2" aria-label="Volumen"><svg class="i12" viewBox="0 0 12 12"><path d="M.7 4.500h2L5.500 2v8L2.700 7.500h-2zM7 4.300c1 1 1 2.400 0 3.400M8.600 3c1.800 1.800 1.800 4.200 0 6M10.200 1.700c2.400 2.600 2.400 6 0 8.600"/></svg></button>
    <time class="text-end ps-1">17:28<br>09/02/2026</time>
  </div>
</div>

<script src="https://cdn.jsdelivr.net/npm/bootstrap@5.3.0/dist/js/bootstrap.bundle.min.js"></script>
<script>
const letters = 'ABCDEFGHIJKLMNOPQRSTUVWX'.split('');
// column widths: row header, then A to X; the last column takes what is left
const widths = [29,102,43,57,43,42,43,43,171,42,43,43,42,43,43,42,43,43,42,43,43,42,43,43,42];
const sheet = {
  A2:'LOS CRACKS DE LA CMK',A5:'KHAN',A6:'LEYES',A7:'PERRY',A8:'ZETAUNO',A9:'COBRA',A10:'HABIBI',A11:'GIAN',A12:'FACHENDO',
  A13:'CLARA',A14:'LICH',A15:'VALEN',A16:'FACKENS',A17:'WIZZY',A18:'MEDINA',A19:'NABUBU',A20:'MARIANNO',A21:'SURE',A22:'VEZETA',
  A23:'NURZA',A24:'POLLI',A25:'NIKO SAMUELLE',A26:'RODRI',A27:'MARU',A28:'ARDILLA',A29:'BRICE',
  B6:'8',B8:'3',B9:'8,5',B11:'8',B13:'4',B16:'4',B17:'5',B18:'6',B19:'6',B20:'6,5',B22:'9',B24:'5',B25:'7',B26:'5,5',
  C20:'AURA + 1000',
  H2:'PERSONAS QUE ME ODIAN / NO LES\nINTERESA HACER CONTENIDO PARA LA\nCMK / SON GORDOS OBESOS VAGOS',
  H6:'PAKITO',H7:'KUKITOW',H8:'VODKAS NOVIOS',H9:'FULVE',H11:'JANTER',H12:'NUTRIA',H13:'LUKITAS',H14:'LICHA',H15:'DKG'
};
document.querySelector('.cells colgroup').innerHTML = widths.map(w => `<col style="width:${w}px">`).join('') + '<col>';
document.querySelector('.cells thead').innerHTML = '<tr><th><div class="corner"></div></th>' +
  letters.map(l => `<th${l === 'B' ? ' class="sel"' : ''}>${l}</th>`).join('') + '<th></th></tr>';
let rows = '';
for (let r = 1; r <= 33; r++) {
  rows += `<tr><th${r === 10 ? ' class="sel"' : ''}>${r}</th>`;
  for (const l of letters) {
    const k = l + r;
    const cls = k === 'B10' ? 'active-cell' : k === 'H2' ? 'wrapped' : l === 'B' ? 'num' : '';
    rows += `<td class="${cls}">${sheet[k] || ''}</td>`;
  }
  rows += '<td></td></tr>';
}
document.querySelector('.cells tbody').innerHTML = rows;
</script>
</body>
</html>
